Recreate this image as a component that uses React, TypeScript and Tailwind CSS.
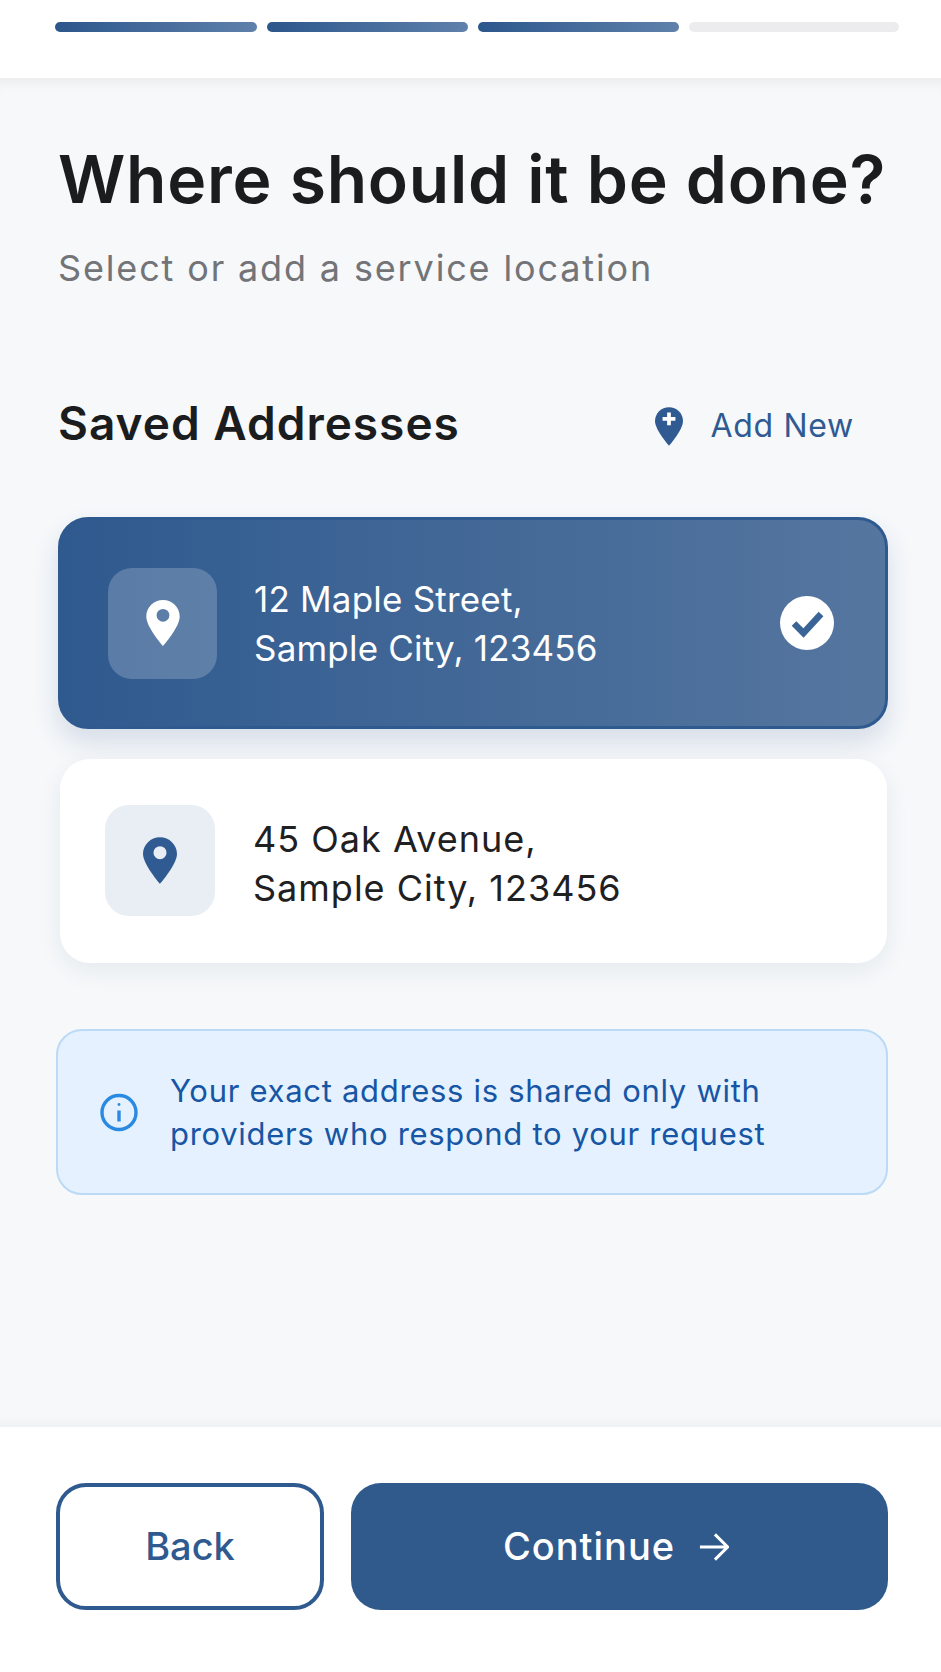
import React from "react";

const font = { fontFamily: "Inter, sans-serif" };

function Pin({ className, fill, hole = 4.6, plus = false }: { className: string; fill: string; hole?: number; plus?: boolean }) {
  return (
    <svg viewBox="0 0 24 33" className={className}>
      <path
        fill={fill}
        fillRule="evenodd"
        d={
          plus
            ? "M12 0C5.4 0 0 5.3 0 11.8 0 19.5 12 33 12 33s12-13.5 12-21.2C24 5.3 18.6 0 12 0z"
            : `M12 0C5.4 0 0 5.3 0 11.8 0 19.5 12 33 12 33s12-13.5 12-21.2C24 5.3 18.6 0 12 0zM12 ${11 - hole}a${hole} ${hole} 0 1 1 0 ${hole * 2}a${hole} ${hole} 0 1 1 0-${hole * 2}z`
        }
      />
      {plus && <path d="M12 4.5v11M6.5 10h11" stroke="#fff" strokeWidth="3.2" fill="none" />}
    </svg>
  );
}

function Segment({ active, width }: { active: boolean; width: string }) {
  return (
    <div
      className={`h-[10px] rounded-full ${width} ${
        active ? "bg-gradient-to-r from-[#2c578c] to-[#5f81ab]" : "bg-[#ececee]"
      }`}
    />
  );
}

export default function App() {
  return (
    <div className="flex h-[1672px] w-[941px] flex-col overflow-hidden bg-white tracking-normal" style={font}>
      <header className="h-[78px] shrink-0 bg-white px-[55px] pt-[22px]">
        <div className="flex w-[844px] gap-[10px]">
          <Segment active width="w-[202px]" />
          <Segment active width="w-[201px]" />
          <Segment active width="w-[201px]" />
          <Segment active={false} width="w-[210px]" />
        </div>
      </header>

      <main className="flex flex-1 flex-col bg-[#f6f8fa] pl-[58px] pr-[53px] pt-[66px] shadow-[inset_0_14px_14px_-10px_rgba(0,0,0,0.06),inset_0_-12px_12px_-10px_rgba(0,0,0,0.05)]">
        <h1 className="whitespace-nowrap text-[66px] font-semibold leading-[70px] tracking-[0.75px] text-[#1b1c1e]">
          Where should it be done?
        </h1>
        <p className="mt-[30px] text-[36px] leading-[48px] tracking-[1.85px] text-[#727478]">
          Select or add a service location
        </p>

        <div className="mt-[104px] flex items-center justify-between">
          <h2 className="text-[46px] font-semibold leading-[54px] tracking-[1px] text-[#1b1c1e]">Saved Addresses</h2>
          <div className="mr-[34px] mt-[6px] flex items-center gap-[27px]">
            <Pin className="h-[39px] w-[28px]" fill="#2f5b92" plus />
            <span className="text-[32px] leading-[40px] tracking-[0.7px] text-[#2f5b92]">Add New</span>
          </div>
        </div>

        <div className="mt-[67px] flex h-[212px] items-center rounded-[30px] border-[3px] border-[#2f5a90] bg-gradient-to-r from-[#2f5a8f] to-[#55769f] pl-[47px] pr-[51px] shadow-[0_14px_26px_rgba(47,90,143,0.16)]">
          <div className="flex h-[111px] w-[109px] shrink-0 items-center justify-center rounded-[24px] bg-white/20">
            <Pin className="h-[46px] w-[34px]" fill="#ffffff" />
          </div>
          <div className="ml-[37px] flex-1 pt-[1px] text-[35px] leading-[49px] tracking-[0.2px] text-white">
            <div>12 Maple Street,</div>
            <div>Sample City, 123456</div>
          </div>
          <svg viewBox="0 0 54 54" className="h-[54px] w-[54px] shrink-0">
            <circle cx="27" cy="27" r="27" fill="#fff" />
            <path d="M14 27.5 23.5 37 41 18" fill="none" stroke="#3a6496" strokeWidth="6.5" />
          </svg>
        </div>

        <div className="ml-[2px] mr-[1px] mt-[30px] flex h-[204px] items-start rounded-[30px] bg-white pl-[45px] pt-[46px] shadow-[0_8px_24px_rgba(30,50,80,0.07)]">
          <div className="flex h-[111px] w-[110px] shrink-0 items-center justify-center rounded-[24px] bg-[#e9edf4]">
            <Pin className="h-[47px] w-[34px]" fill="#2f5b92" />
          </div>
          <div className="ml-[38px] pt-[10px] text-[36px] leading-[49px] tracking-[1px] text-[#1f2022]">
            <div>45 Oak Avenue,</div>
            <div>Sample City, 123456</div>
          </div>
        </div>

        <div className="-ml-[2px] mt-[66px] flex h-[166px] items-center rounded-[26px] border-2 border-[#bcdaf5] bg-[#e5f1fe] pl-[42px]">
          <svg viewBox="0 0 38 38" className="h-[39px] w-[38px] shrink-0" fill="none" stroke="#2a8ae2" strokeWidth="3.4">
            <circle cx="19" cy="19" r="17" />
            <path d="M19 17v11" />
            <circle cx="19" cy="11" r="1.4" fill="#2a8ae2" stroke="none" />
          </svg>
          <div className="ml-[32px] text-[31px] leading-[43px] tracking-[0.7px] text-[#1656a5]">
            <div>Your exact address is shared only with</div>
            <div>providers who respond to your request</div>
          </div>
        </div>
      </main>

      <footer className="flex h-[245px] shrink-0 items-start gap-[27px] bg-white pl-[56px] pr-[53px] pt-[56px]">
        <button className="flex h-[127px] w-[268px] items-center justify-center rounded-[30px] border-[4px] border-[#2f5a8f] bg-white text-[38px] font-medium text-[#2f5a8f]">
          Back
        </button>
        <button className="flex h-[127px] flex-1 items-center justify-center gap-[24px] rounded-[30px] bg-[#2f5a8b] pr-[7px] text-[38px] font-medium tracking-[1px] text-white">
          Continue
          <svg viewBox="0 0 32 30" className="h-[30px] w-[30px]" fill="none" stroke="#fff" strokeWidth="3.2">
            <path d="M1 15h29M17 1.5 30.5 15 17 28.5" />
          </svg>
        </button>
      </footer>
    </div>
  );
}
